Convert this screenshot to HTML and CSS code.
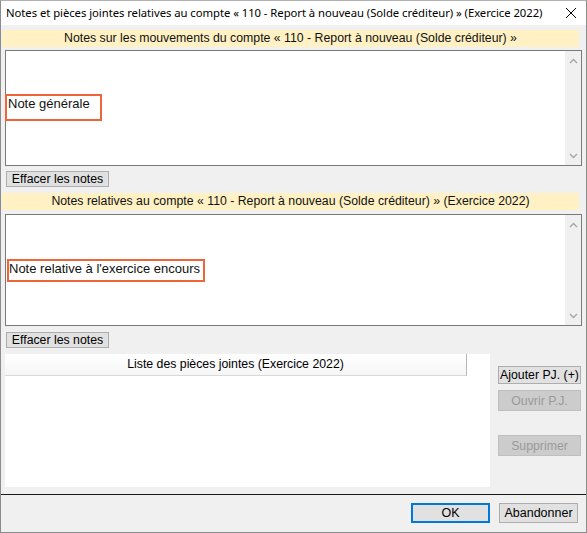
FILE: index.html
```html
<!DOCTYPE html>
<html lang="fr">
<head>
<meta charset="utf-8">
<title>Notes et pièces jointes</title>
<link rel="stylesheet" href="styles.css">
</head>
<body>
<div class="window">
  <div class="titlebar">
    <span class="title">Notes et pièces jointes relatives au compte « 110 - Report à nouveau (Solde créditeur) » (Exercice 2022)</span>
    <svg class="close" width="12" height="12" viewBox="0 0 12 12"><path d="M1 1 L11 11 M11 1 L1 11" stroke="#000" stroke-width="1"/></svg>
  </div>
  <div class="body">
    <div class="band band-1">Notes sur les mouvements du compte « 110 - Report à nouveau (Solde créditeur) »</div>
    <div class="memo memo-1">
      <div class="memo-text memo-text-1">Note générale<span class="mark mark-1"></span></div>
      <div class="vscroll">
        <svg width="9" height="6" viewBox="0 0 9 6"><path d="M1 5 L4.5 1.5 L8 5" fill="none" stroke="#a6a6a6" stroke-width="1.4"/></svg>
        <svg width="9" height="6" viewBox="0 0 9 6"><path d="M1 1 L4.5 4.5 L8 1" fill="none" stroke="#a6a6a6" stroke-width="1.4"/></svg>
      </div>
    </div>
    <button class="btn btn-clear btn-clear-1">Effacer les notes</button>
    <div class="band band-2">Notes relatives au compte « 110 - Report à nouveau (Solde créditeur) » (Exercice 2022)</div>
    <div class="memo memo-2">
      <div class="memo-text memo-text-2">Note relative à l'exercice encours<span class="mark mark-2"></span></div>
      <div class="vscroll">
        <svg width="9" height="6" viewBox="0 0 9 6"><path d="M1 5 L4.5 1.5 L8 5" fill="none" stroke="#a6a6a6" stroke-width="1.4"/></svg>
        <svg width="9" height="6" viewBox="0 0 9 6"><path d="M1 1 L4.5 4.5 L8 1" fill="none" stroke="#a6a6a6" stroke-width="1.4"/></svg>
      </div>
    </div>
    <button class="btn btn-clear btn-clear-2">Effacer les notes</button>
    <div class="attach">
      <div class="list">
        <div class="list-head">Liste des pièces jointes (Exercice 2022)</div>
      </div>
      <div class="side">
        <button class="btn btn-side btn-add">Ajouter PJ. (+)</button>
        <button class="btn btn-side btn-off btn-open">Ouvrir P.J.</button>
        <button class="btn btn-side btn-off btn-del">Supprimer</button>
      </div>
    </div>
  </div>
  <div class="footer">
    <button class="btn btn-foot btn-ok">OK</button>
    <button class="btn btn-foot">Abandonner</button>
  </div>
</div>
</body>
</html>
```

FILE: styles.css
```css
* { box-sizing: border-box; }
html, body { margin: 0; padding: 0; background: #f0f0f0; }
body { font-family: "Liberation Sans", Arial, sans-serif; font-size: 12px; color: #000; }

.window {
  width: 587px;
  height: 533px;
  border: 1px solid #8c8c8c;
  border-top-color: #b0b0b0;
  background: #f0f0f0;
  display: flex;
  flex-direction: column;
  overflow: hidden;
}

.titlebar {
  height: 24px;
  background: #fff;
  display: flex;
  align-items: center;
  justify-content: space-between;
  padding: 0 9px 0 5px;
  flex: none;
}
.title {
  font-family: "Noto Sans", "Open Sans", sans-serif;
  font-size: 11.3px;
  white-space: nowrap;
  letter-spacing: -0.05px;
  padding-bottom: 1px;
}
.close { margin-top: -1px; }

.body {
  display: flex;
  flex-direction: column;
  align-items: flex-start;
  padding-top: 5px;
  flex: none;
}

.band {
  width: 577px;
  height: 17px;
  margin-left: 1px;
  background: #fff1c4;
  text-align: center;
  line-height: 17px;
  font-size: 12.3px;
  white-space: nowrap;
  color: #111;
}
.band-2 { margin-top: 6px; }

.memo {
  position: relative;
  width: 577px;
  margin-left: 4px;
  margin-top: 3px;
  background: #fff;
  border: 1px solid #7a7a7a;
  display: flex;
}
.memo-1 { height: 116px; }
.memo-2 { height: 112px; margin-top: 4px; }

.memo-text {
  flex: 1;
  font-size: 13px;
  padding-left: 2px;
  color: #111;
}
.memo-text-1 { padding-top: 45px; }
.memo-text-2 { padding-top: 46px; padding-left: 3px; }

.mark {
  position: absolute;
  border: 2px solid #f0643a;
}
.mark-1 { left: -1px; top: 43px; width: 97px; height: 27px; }
.mark-2 { left: 1px; top: 44px; width: 198px; height: 23px; }

.vscroll {
  width: 16px;
  background: #f0f0f0;
  display: flex;
  flex-direction: column;
  justify-content: space-between;
  align-items: center;
  padding: 7px 0 6px;
}

.btn {
  font-family: "Liberation Sans", Arial, sans-serif;
  font-size: 12.3px;
  color: #000;
  background: #e1e1e1;
  border: 1px solid #adadad;
  padding: 0;
  margin: 0;
  line-height: 14px;
}
.btn-clear {
  width: 103px;
  height: 16px;
  margin-left: 5px;
  margin-top: 5px;
}
.btn-clear-2 { margin-top: 6px; }

.attach {
  display: flex;
  margin-top: 6px;
  width: 100%;
}
.list {
  width: 485px;
  height: 133px;
  margin-left: 4px;
  background: #fff;
}
.list-head {
  width: 462px;
  height: 22px;
  border-bottom: 1px solid #d9d9d9;
  border-right: 1px solid #b8b8b8;
  background: linear-gradient(#ffffff, #f6f6f6);
  text-align: center;
  line-height: 20px;
  font-size: 12.3px;
}

.side {
  margin-left: 8px;
  display: flex;
  flex-direction: column;
  padding-top: 12px;
}
.btn-side { width: 83px; height: 18px; }
.btn-off {
  background: #cccccc;
  border-color: #bfbfbf;
  color: #9a9a9a;
  height: 21px;
}
.btn-open { margin-top: 6px; }
.btn-del { margin-top: 24px; }

.footer {
  margin-top: 7px;
  border-top: 1px solid #1a1a1a;
  flex: 1;
  display: flex;
  justify-content: flex-end;
  align-items: flex-start;
  padding: 8px 8px 0 0;
  gap: 9px;
}
.btn-foot {
  width: 79px;
  height: 20px;
  font-size: 12.5px;
}
.btn-ok {
  border: 2px solid #0078d7;
}
```
